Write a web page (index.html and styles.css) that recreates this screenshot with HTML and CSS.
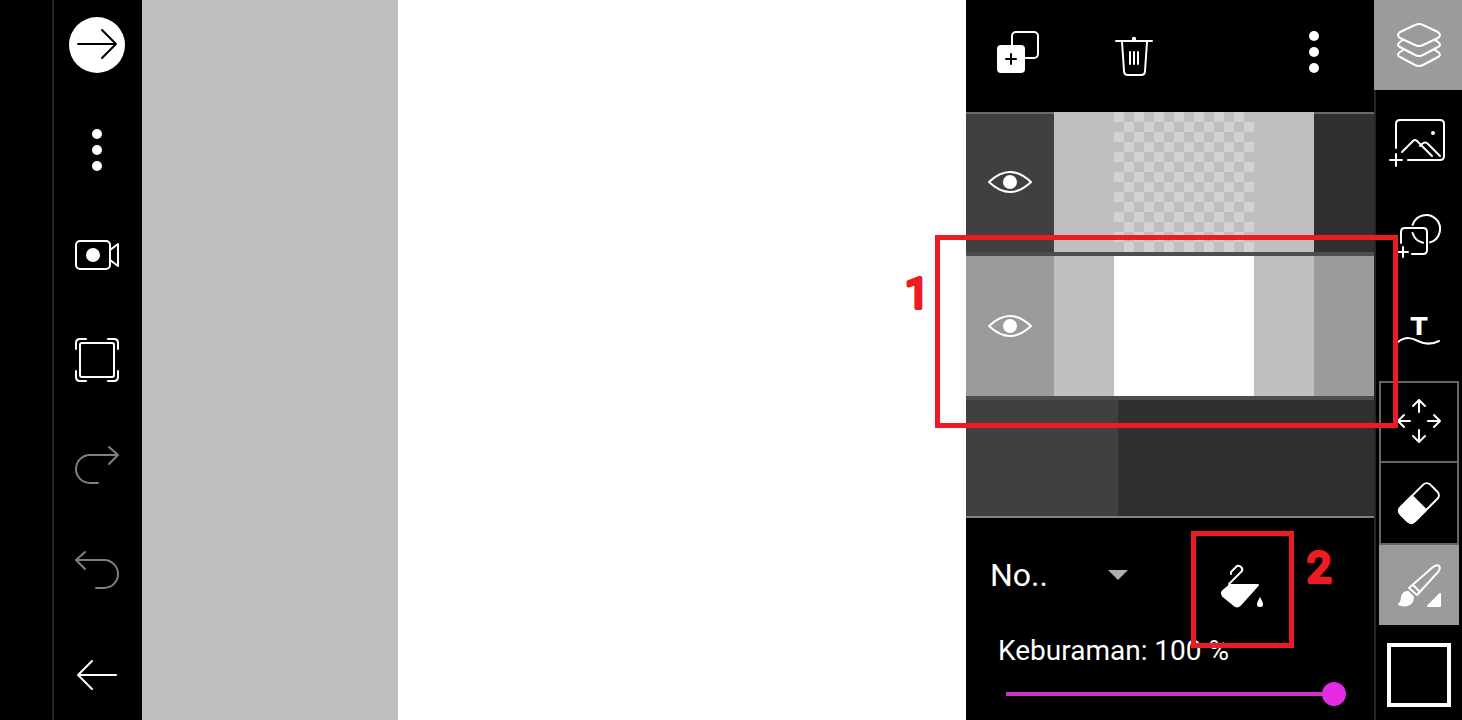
FILE: index.html
```
<!DOCTYPE html>
<html lang="id">
<head>
  <meta charset="UTF-8">
  <meta name="viewport" content="width=device-width, initial-scale=1.0">
  <title>Layer Editor</title>
  <link rel="stylesheet" href="styles.css">
</head>
<body>
  <div class="app">
    <nav class="left-bar">
      <button aria-label="Next">
        <span class="round"><svg width="48" height="48"><path d="M5 23H43M29 9l14 14-14 14"/></svg></span>
      </button>
      <button aria-label="Menu">
        <svg class="solid" width="48" height="48"><circle cx="24" cy="8" r="5"/><circle cx="24" cy="24" r="5"/><circle cx="24" cy="40" r="5"/></svg>
      </button>
      <button aria-label="Record">
        <svg width="48" height="48"><rect x="3" y="10" width="34" height="28" rx="4"/><path d="M37 19l8-6v22l-8-6"/><circle class="fill" cx="20" cy="24" r="6"/></svg>
      </button>
      <button aria-label="Fit to screen">
        <svg width="48" height="48"><rect x="7" y="7" width="34" height="34" rx="2"/><path d="M3 13V7q0-4 4-4h6M35 3h6q4 0 4 4v6M45 35v6q0 4-4 4h-6M13 45H7q-4 0-4-4v-6"/></svg>
      </button>
      <button class="dim" aria-label="Redo">
        <svg width="48" height="48"><path d="M45 14H17a14 14 0 0 0 0 28h8M36 6l9 8-9 9"/></svg>
      </button>
      <button class="dim" aria-label="Undo">
        <svg width="48" height="48"><path d="M3 14h28a14 14 0 0 1 0 28h-8M12 6l-9 8 9 9"/></svg>
      </button>
      <button aria-label="Back">
        <svg width="48" height="48"><path d="M43 24H5M19 10L5 24l14 14"/></svg>
      </button>
    </nav>

    <main class="canvas"></main>

    <section class="panel">
      <header class="panel-head">
        <button class="duplicate" aria-label="Duplicate layer">
          <svg width="48" height="48"><rect x="18" y="4" width="26" height="26" rx="4"/><rect class="fill" x="4" y="18" width="26" height="26" rx="3"/><path class="dark" d="M12 31h10M17 26v10"/></svg>
        </button>
        <button class="delete" aria-label="Delete layer">
          <svg width="48" height="48"><path d="M6 13h36M12 14l2 29q0 4 4 4h13q4 0 4-4l2-29M20 24v12M24 24v12M28 24v12"/><circle class="fill" cx="24" cy="11" r="1.2"/></svg>
        </button>
        <button class="more" aria-label="More">
          <svg class="solid" width="48" height="48"><circle cx="24" cy="8" r="5"/><circle cx="24" cy="24" r="5"/><circle cx="24" cy="40" r="5"/></svg>
        </button>
      </header>

      <div class="layers">
        <div class="layer">
          <button class="eye" aria-label="Toggle layer 2">
            <svg width="48" height="48"><path d="M3 24q21-20 42 0q-21 20-42 0z"/><circle class="fill" cx="24" cy="24" r="6"/></svg>
          </button>
          <div class="thumb"><div class="checker"></div></div>
        </div>
        <div class="layer selected">
          <button class="eye" aria-label="Toggle layer 1">
            <svg width="48" height="48"><path d="M3 24q21-20 42 0q-21 20-42 0z"/><circle class="fill" cx="24" cy="24" r="6"/></svg>
          </button>
          <div class="thumb"><div class="blank"></div></div>
        </div>
      </div>

      <footer class="controls">
        <div class="control-row">
          <div class="blend">
            <select aria-label="Blend mode">
              <option>No..</option>
            </select>
          </div>
          <button class="bucket" aria-label="Fill">
            <svg width="48" height="48"><path d="M13 12v-2l6-6q2-1 4 1t1 4L11 22"/><path class="fill" d="M12 23h28L22 43q-3 3-6 0L5 34q-2-3 0-5z"/><path class="drop" d="M42 35q6 10 0 10t0-10z"/></svg>
          </button>
        </div>
        <label for="opacity">Keburaman: 100 %</label>
        <input type="range" id="opacity" min="0" max="100" value="100">
      </footer>

      <!-- tutorial markers -->
      <div class="mark mark-layer"></div>
      <svg class="step step-one" width="40" height="60"><text x="20" y="44">1</text></svg>
      <div class="mark mark-fill"></div>
      <svg class="step step-two" width="40" height="60"><text x="20" y="44">2</text></svg>
    </section>

    <nav class="right-bar">
      <button class="layers-btn" aria-label="Layers">
        <svg width="48" height="48"><path d="M20 4q4-2 8 0l15 7q4 3 0 6l-15 7q-4 2-8 0L5 17q-4-3 0-6zM8 19l-3 2q-4 3 0 5l15 8q4 2 8 0l15-8q4-2 0-5l-3-2M8 29l-3 2q-4 3 0 5l15 8q4 2 8 0l15-8q4-2 0-5l-3-2"/></svg>
      </button>
      <div class="insert">
        <button aria-label="Add image">
          <svg width="60" height="60"><path d="M7 37V13q0-4 4-4h40q4 0 4 4v32q0 4-4 4H19M1 49h12M7 43v12M13 41l11-11q2-2 4 0l15 15M31 35l2-2q3-3 6 0l12 12"/><circle class="fill" cx="44" cy="22" r="1"/></svg>
        </button>
        <button aria-label="Add shape">
          <svg width="60" height="60"><path d="M12 37V26q0-4 4-4h18q4 0 4 4v18q0 4-4 4H23M9 46h10M14 41v10M23.6 19A14 14 0 1 1 41 36.4M23.6 27A14 14 0 0 0 34 36.7"/></svg>
        </button>
        <button aria-label="Add text">
          <svg width="60" height="60"><text class="letter" x="30" y="34">T</text><path d="M9 41c8-6 14-4 20-1s13 4 21 0"/></svg>
        </button>
      </div>
      <div class="tools">
        <button aria-label="Move">
          <svg width="48" height="48"><path d="M24 2v12M18 8l6-6 6 6M24 32v12M18 38l6 6 6-6M3 23h12M9 17l-6 6 6 6M33 23h12M39 17l6 6-6 6"/></svg>
        </button>
        <button aria-label="Eraser">
          <svg width="48" height="48"><g transform="rotate(-45 24 24)"><rect x="3" y="14" width="42" height="20" rx="5"/><path class="fill" d="M24 14H8q-5 0-5 5v10q0 5 5 5h16z"/></g></svg>
        </button>
        <button class="active" aria-label="Brush">
          <svg width="48" height="48"><path d="M14 27L38 6q4-3 6-1t-1 6L22 34M14 27l8 7M18 24l7 7"/><path class="fill" d="M13 31q-5 0-6 5 0 5-3 7 6 3 11 0 3-3 3-7z"/><path class="fill" d="M45 33v12H33z"/></svg>
        </button>
      </div>
      <button class="color" aria-label="Color"></button>
    </nav>
  </div>
</body>
</html>
```
FILE: styles.css
```
* {
  box-sizing: border-box;
}

body {
  margin: 0;
  background: #000;
  color: white;
  font-family: Roboto, Arial, sans-serif;
}

button {
  display: flex;
  justify-content: center;
  align-items: center;
  padding: 0;
  border: none;
  background: none;
  color: white;
  cursor: pointer;
}

svg {
  display: block;
  flex: none;
  fill: none;
  stroke: currentColor;
  stroke-width: 2;
  stroke-linecap: round;
  stroke-linejoin: round;
}

svg .fill {
  fill: currentColor;
}

svg .drop,
.letter,
.solid {
  fill: currentColor;
  stroke: none;
}

svg .dark {
  stroke: black;
}

svg text {
  text-anchor: middle;
}

.letter {
  font-family: "DejaVu Sans", sans-serif;
  font-size: 25px;
  font-weight: bold;
}

.app {
  display: flex;
  min-height: 100vh;
  padding-left: 52px;
}

/* left toolbar */
.left-bar {
  display: flex;
  flex-direction: column;
  justify-content: space-between;
  width: 90px;
  box-shadow: inset 2px 0 #262626;
}

.left-bar button {
  height: 90px;
}

.left-bar .dim {
  color: #808080;
}

.round {
  display: flex;
  justify-content: center;
  align-items: center;
  width: 56px;
  height: 56px;
  border-radius: 50%;
  background: white;
  color: black;
}

.canvas {
  flex: 1;
  background: white;
  border-left: 256px solid #bfbfbf;
}

/* layer panel */
.panel {
  position: relative;
  z-index: 1;
  display: flex;
  flex-direction: column;
  width: 408px;
}

.panel-head {
  display: flex;
  height: 112px;
  padding-bottom: 8px;
}

.duplicate {
  width: 104px;
}

.delete {
  width: 128px;
}

.more {
  width: 120px;
  margin-left: auto;
}

.layers {
  flex: 1;
  min-height: 406px;
  background: linear-gradient(to right, #404040 152px, #303030 152px);
  border-bottom: 2px solid #848484;
}

.layer {
  display: flex;
  height: 144px;
  border-bottom: 4px solid #4d4d4d;
  box-shadow: inset 0 2px #6a6a6a;
}

.layer.selected {
  background: #9b9b9b;
  box-shadow: none;
}

.eye {
  width: 88px;
}

.layer:first-child .eye {
  background: #404040;
  box-shadow: inset 0 2px #6a6a6a;
}

.layer:first-child {
  background: #303030;
}

.thumb {
  display: flex;
  justify-content: center;
  width: 260px;
  background: #bfbfbf;
}

.checker,
.blank {
  width: 140px;
  background: white;
}

.checker {
  background: conic-gradient(#bfbfbf 25%, #d2d2d2 25% 50%, #bfbfbf 50% 75%, #d2d2d2 75%) 0 0 / 20px 20px;
}

.controls {
  display: flex;
  flex-direction: column;
  height: 202px;
}

.control-row {
  display: flex;
  height: 115px;
}

.blend {
  position: relative;
  width: 228px;
  padding: 36px 60px 0 24px;
}

.blend::after {
  content: "";
  position: absolute;
  left: 142px;
  top: 52px;
  border: 10px solid transparent;
  border-top-color: #b0b0b0;
  border-bottom: none;
}

.blend select {
  appearance: none;
  width: 100%;
  height: 42px;
  padding: 0;
  border: none;
  background: none;
  color: white;
  font-family: inherit;
  font-size: 32px;
}

.bucket {
  width: 96px;
  height: 136px;
}

.controls label {
  margin-left: 32px;
  font-size: 28px;
  line-height: 36px;
}

.controls input {
  appearance: none;
  height: 24px;
  margin: 13px 28px 0;
  background: linear-gradient(#cc33cc, #cc33cc) center / calc(100% - 24px) 4px no-repeat;
}

.controls input::-webkit-slider-thumb {
  appearance: none;
  width: 24px;
  height: 24px;
  border-radius: 50%;
  background: #e22be2;
}

/* tutorial markers */
.mark {
  position: absolute;
  border: 5px solid #eb1c24;
  pointer-events: none;
}

.mark-layer {
  left: -31px;
  top: 235px;
  width: 463px;
  height: 193px;
}

.mark-fill {
  left: 225px;
  top: 531px;
  width: 103px;
  height: 117px;
}

.step {
  position: absolute;
  color: #eb1c24;
  fill: currentColor;
  stroke-width: 4;
  font-size: 43px;
}

.step-one {
  left: -69px;
  top: 264px;
}

.step-two {
  left: 333px;
  top: 538px;
}

/* right toolbar */
.right-bar {
  display: flex;
  flex-direction: column;
  width: 88px;
  border-left: 2px solid #262626;
}

.layers-btn {
  height: 90px;
  margin-left: -2px;
  padding-left: 2px;
  background: #9b9b9b;
}

.insert {
  display: grid;
  gap: 1px;
  margin: 4px 0 3px;
}

.insert button {
  height: 94px;
}

.tools {
  margin: 0 3px;
}

.tools button {
  width: 100%;
  height: 82px;
  border: 2px solid #666;
  border-top: none;
}

.tools button:first-child {
  border-top: 2px solid #666;
}

.tools .active {
  height: 80px;
  border: none;
  background: #9b9b9b;
}

.color {
  width: 64px;
  height: 64px;
  margin: 18px auto 0;
  border: 4px solid white;
}
```
